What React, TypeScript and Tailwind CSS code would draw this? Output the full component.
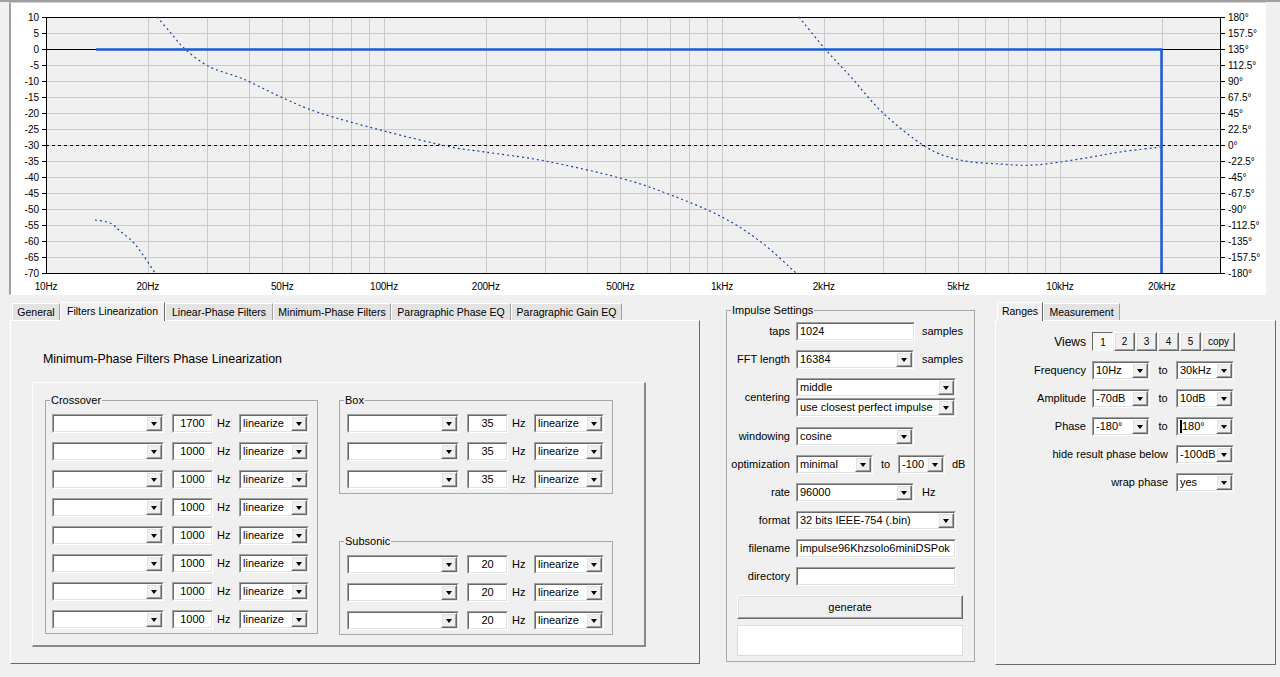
import React from "react"

// Win32 classic 3D borders
const SUNK_OUT = "border border-t-[#a0a0a0] border-l-[#a0a0a0] border-r-white border-b-white"
const SUNK_IN = "border border-t-[#696969] border-l-[#696969] border-r-[#e3e3e3] border-b-[#e3e3e3]"
const RAISE_OUT = "border border-t-white border-l-white border-r-[#696969] border-b-[#696969]"
const RAISE_IN = "border border-t-[#e3e3e3] border-l-[#e3e3e3] border-r-[#a0a0a0] border-b-[#a0a0a0]"

// chart geometry (page px)
const X0 = 46
const X1 = 1220
const Y0 = 17
const Y1 = 273
const DECADE = 338
const fx = (f: number) => X0 + Math.log10(f / 10) * DECADE

const freqs: number[] = []
for (const d of [10, 100, 1000]) for (let m = 1; m <= 9; m++) freqs.push(d * m)
freqs.push(10000, 20000)

const freqLabels: [number, string][] = [
  [10, "10Hz"], [20, "20Hz"], [50, "50Hz"], [100, "100Hz"], [200, "200Hz"], [500, "500Hz"],
  [1000, "1kHz"], [2000, "2kHz"], [5000, "5kHz"], [10000, "10kHz"], [20000, "20kHz"],
]

const phaseA = [[95, 220], [110, 223], [120, 231], [133, 242], [143, 255], [155, 273]]
const phaseB = [
  [157, 17], [170, 32], [185, 49], [208, 66], [235, 76], [250, 82], [283, 98], [320, 113],
  [384, 131], [451, 147], [485, 152], [545, 161], [620, 178], [671, 195], [722, 217],
  [761, 242], [796, 273],
]
const phaseC = [
  [799, 17], [826, 50], [851, 77], [883, 113], [926, 147], [960, 160], [1000, 164],
  [1035, 165], [1080, 159], [1120, 152], [1161, 147],
]

// catmull-rom -> cubic bezier
function smooth(pts: number[][]) {
  let d = `M${pts[0][0]},${pts[0][1]}`
  for (let i = 0; i < pts.length - 1; i++) {
    const p0 = pts[i - 1] || pts[i]
    const p1 = pts[i]
    const p2 = pts[i + 1]
    const p3 = pts[i + 2] || p2
    const c1 = [p1[0] + (p2[0] - p0[0]) / 6, p1[1] + (p2[1] - p0[1]) / 6]
    const c2 = [p2[0] - (p3[0] - p1[0]) / 6, p2[1] - (p3[1] - p1[1]) / 6]
    d += ` C${c1[0]},${c1[1]} ${c2[0]},${c2[1]} ${p2[0]},${p2[1]}`
  }
  return d
}

function Chart() {
  const rows = Array.from({ length: 17 }, (_, i) => i)
  return (
    <svg width={1254} height={291} viewBox="11 3 1254 291" className="block">
      <rect x={X0} y={Y0} width={X1 - X0} height={Y1 - Y0} fill="#f0f0f0" />
      {freqs.map((f) => (
        <line key={f} x1={Math.round(fx(f)) + 0.5} x2={Math.round(fx(f)) + 0.5} y1={Y0} y2={Y1} stroke="#cacaca" />
      ))}
      {rows.map((i) => (
        <line key={i} x1={X0} x2={X1} y1={Y0 + i * 16 + 0.5} y2={Y0 + i * 16 + 0.5} stroke="#cacaca" />
      ))}
      {/* frame + ticks */}
      <rect x={X0 + 0.5} y={Y0 + 0.5} width={X1 - X0} height={Y1 - Y0} fill="none" stroke="#000" />
      {rows.map((i) => (
        <g key={i}>
          <line x1={X0 - 4} x2={X0} y1={Y0 + i * 16 + 0.5} y2={Y0 + i * 16 + 0.5} stroke="#000" />
          <line x1={X1} x2={X1 + 5} y1={Y0 + i * 16 + 0.5} y2={Y0 + i * 16 + 0.5} stroke="#000" />
          <text x={39} y={Y0 + i * 16 + 3.5} textAnchor="end" fontSize={10} fill="#000">
            {10 - 5 * i}
          </text>
          <text x={1228} y={Y0 + i * 16 + 3.5} fontSize={10} fill="#000">
            {`${180 - 22.5 * i}°`}
          </text>
        </g>
      ))}
      {freqLabels.map(([f, l]) => (
        <text key={l} x={fx(f)} y={290} textAnchor="middle" fontSize={10} letterSpacing={-0.2} fill="#000">
          {l}
        </text>
      ))}
      {/* reference lines */}
      <line x1={X0} x2={X1} y1={49.5} y2={49.5} stroke="#000" />
      <line x1={X0} x2={X1} y1={145.5} y2={145.5} stroke="#000" strokeDasharray="3 3" />
      {/* phase */}
      {[phaseA, phaseB, phaseC].map((p, i) => (
        <path key={i} d={smooth(p)} fill="none" stroke="#1a46a0" strokeWidth={1.2} strokeDasharray="2 3" />
      ))}
      {/* amplitude */}
      <polyline points="96,49.5 1161.5,49.5 1161.5,273" fill="none" stroke="#1d5ad6" strokeWidth={2.5} />
    </svg>
  )
}

function Arrow() {
  return (
    <div className={`w-[16px] h-full shrink-0 bg-[#f0f0f0] ${RAISE_OUT}`}>
      <div className={`h-full flex items-center justify-center ${RAISE_IN}`}>
        <div className="w-0 h-0 border-x-[3px] border-x-transparent border-t-[4px] border-t-black" />
      </div>
    </div>
  )
}

function Combo({ w, value }: { w: string; value?: React.ReactNode }) {
  return (
    <div className={`${w} h-[19px] shrink-0 ${SUNK_OUT}`}>
      <div className={`h-full flex bg-white ${SUNK_IN}`}>
        <span className="flex-1 pl-[2px] leading-[15px] whitespace-nowrap overflow-hidden flex items-center">
          {value}
        </span>
        <Arrow />
      </div>
    </div>
  )
}

function TextBox({ w, value, center }: { w: string; value?: string; center?: boolean }) {
  return (
    <div className={`${w} h-[19px] shrink-0 ${SUNK_OUT}`}>
      <div className={`h-full bg-white leading-[15px] whitespace-nowrap overflow-hidden px-[2px] ${SUNK_IN} ${center ? "text-center" : ""}`}>
        {value}
      </div>
    </div>
  )
}

function Group({ label, className, children }: { label: string; className: string; children: React.ReactNode }) {
  return (
    <div className={`relative border border-[#a8a8a8] shrink-0 ${className}`}>
      <span className="absolute -top-[7px] left-[4px] bg-[#f0f0f0] px-[1px] leading-[13px]">{label}</span>
      {children}
    </div>
  )
}

function Tab({ label, w, active }: { label: string; w: string; active?: boolean }) {
  return active ? (
    <div className={`${w} h-[19px] -mb-[1px] relative z-10 bg-[#f0f0f0] border-t border-l border-r border-t-white border-l-white border-r-[#696969] text-center text-[10.5px] leading-[17px]`}>
      {label}
    </div>
  ) : (
    <div className={`${w} h-[17px] bg-[#e3e3e3] border-t border-l border-r border-t-white border-l-white border-r-[#a0a0a0] text-center text-[10.5px] leading-[16px]`}>
      {label}
    </div>
  )
}

function FilterRow({ hz }: { hz: string }) {
  return (
    <div className="flex items-center h-[19px]">
      <Combo w="w-[112px]" />
      <TextBox w="w-[41px] ml-[8px]" value={hz} center />
      <span className="w-[26px] pl-[4px]">Hz</span>
      <Combo w="w-[70px]" value="linearize" />
    </div>
  )
}

function FormRow({ label, children, className = "" }: { label: string; children: React.ReactNode; className?: string }) {
  return (
    <div className={`flex items-center ${className}`}>
      <span className="w-[63px] text-right whitespace-nowrap">{label}</span>
      <div className="ml-[6px] flex items-center">{children}</div>
    </div>
  )
}

function ViewBtn({ label, pressed, w = "w-[21px]" }: { label: string; pressed?: boolean; w?: string }) {
  return pressed ? (
    <div className={`${w} h-[19px] border border-t-[#696969] border-l-[#696969] border-r-white border-b-white bg-[#f7f7f7] text-[10px] flex items-center justify-center pt-[2px] pl-[1px]`}>
      {label}
    </div>
  ) : (
    <div className={`${w} h-[19px] ${RAISE_OUT} bg-[#f0f0f0]`}>
      <div className={`h-full text-[10px] flex items-center justify-center ${RAISE_IN}`}>{label}</div>
    </div>
  )
}

function RangeRow({ label, from, to, className = "" }: { label: string; from: React.ReactNode; to: React.ReactNode; className?: string }) {
  return (
    <div className={`flex items-center ${className}`}>
      <span className="w-[90px] text-right">{label}</span>
      <Combo w="w-[58px] ml-[6px]" value={from} />
      <span className="w-[26px] text-center">to</span>
      <Combo w="w-[58px]" value={to} />
    </div>
  )
}

export default function App() {
  return (
    <div className="w-[1280px] h-[677px] overflow-hidden bg-[#f0f0f0] text-[11px] text-black font-['Liberation_Sans',Arial,sans-serif]">
      {/* graph */}
      <div className="border-t-2 border-[#a0a0a0] pl-[9px]">
        <div className="w-[1257px] border-l-2 border-t border-r border-b border-l-[#a0a0a0] border-t-[#d0d0d0] border-r-white border-b-white bg-white">
          <Chart />
        </div>
      </div>

      <div className="flex items-start pl-[10px]">
        {/* Filters tab control */}
        <div className="w-[690px] shrink-0 mt-[7px]">
          <div className="flex items-end h-[18px] pl-[2px]">
            <Tab label="General" w="w-[48px]" />
            <Tab label="Filters Linearization" w="w-[105px]" active />
            <Tab label="Linear-Phase Filters" w="w-[108px]" />
            <Tab label="Minimum-Phase Filters" w="w-[118px]" />
            <Tab label="Paragraphic Phase EQ" w="w-[120px]" />
            <Tab label="Paragraphic Gain EQ" w="w-[111px]" />
          </div>
          <div className="h-[344px] border border-t-white border-l-white border-r-[#696969] border-b-[#696969]">
            <div className="ml-[32px] mt-[31px] text-[12.4px] leading-[15px]">Minimum-Phase Filters Phase Linearization</div>
            <div className="ml-[21px] mt-[15px] w-[614px] h-[265px] border-t border-l border-r-2 border-b-2 border-t-white border-l-white border-r-[#8a8a8a] border-b-[#8a8a8a] flex items-start pl-[12px] pt-[17px] gap-[21px]">
              <Group label="Crossover" className="w-[273px] pl-[6px] pt-[13px] pb-[4px]">
                <div className="flex flex-col gap-[9px]">
                  {["1700", "1000", "1000", "1000", "1000", "1000", "1000", "1000"].map((hz, i) => (
                    <FilterRow key={i} hz={hz} />
                  ))}
                </div>
              </Group>
              <div className="flex flex-col">
                <Group label="Box" className="w-[274px] pl-[7px] pt-[13px] pb-[4px]">
                  <div className="flex flex-col gap-[9px]">
                    {[0, 1, 2].map((i) => (
                      <FilterRow key={i} hz="35" />
                    ))}
                  </div>
                </Group>
                <Group label="Subsonic" className="w-[274px] mt-[47px] pl-[7px] pt-[13px] pb-[4px]">
                  <div className="flex flex-col gap-[9px]">
                    {[0, 1, 2].map((i) => (
                      <FilterRow key={i} hz="20" />
                    ))}
                  </div>
                </Group>
              </div>
            </div>
          </div>
        </div>

        {/* Impulse settings */}
        <Group label="Impulse Settings" className="ml-[26px] mt-[15px] w-[249px] pt-[11px] pb-[5px]">
          <FormRow label="taps">
            <TextBox w="w-[119px]" value="1024" />
            <span className="ml-[7px]">samples</span>
          </FormRow>
          <FormRow label="FFT length" className="mt-[9px]">
            <Combo w="w-[118px]" value="16384" />
            <span className="ml-[8px]">samples</span>
          </FormRow>
          <FormRow label="centering" className="mt-[9px]">
            <div className="flex flex-col gap-[1px]">
              <Combo w="w-[160px]" value="middle" />
              <Combo w="w-[160px]" value="use closest perfect impulse" />
            </div>
          </FormRow>
          <FormRow label="windowing" className="mt-[10px]">
            <Combo w="w-[118px]" value="cosine" />
          </FormRow>
          <FormRow label="optimization" className="mt-[9px]">
            <Combo w="w-[77px]" value="minimal" />
            <span className="w-[25px] text-center">to</span>
            <Combo w="w-[47px]" value="-100" />
            <span className="ml-[7px]">dB</span>
          </FormRow>
          <FormRow label="rate" className="mt-[9px]">
            <Combo w="w-[118px]" value="96000" />
            <span className="ml-[8px]">Hz</span>
          </FormRow>
          <FormRow label="format" className="mt-[9px]">
            <Combo w="w-[160px]" value="32 bits IEEE-754 (.bin)" />
          </FormRow>
          <FormRow label="filename" className="mt-[9px]">
            <TextBox w="w-[160px]" value="impulse96Khzsolo6miniDSPok" />
          </FormRow>
          <FormRow label="directory" className="mt-[9px]">
            <TextBox w="w-[160px]" />
          </FormRow>
          <div className={`ml-[10px] mt-[9px] w-[226px] h-[24px] bg-[#f0f0f0] ${RAISE_OUT}`}>
            <div className={`h-full flex items-center justify-center ${RAISE_IN}`}>generate</div>
          </div>
          <div className="ml-[10px] mt-[6px] w-[226px] h-[31px] bg-white border border-[#dcdcdc]" />
        </Group>

        {/* Ranges tab control */}
        <div className="ml-[20px] w-[281px] shrink-0 mt-[7px]">
          <div className="flex items-end h-[18px] pl-[2px]">
            <Tab label="Ranges" w="w-[46px]" active />
            <Tab label="Measurement" w="w-[77px]" />
          </div>
          <div className="h-[345px] border border-t-white border-l-white border-r-[#696969] border-b-[#696969] pt-[11px]">
            <div className="flex items-center">
              <span className="w-[90px] text-right text-[12px]">Views</span>
              <div className="ml-[6px] flex gap-[1px]">
                <ViewBtn label="1" pressed />
                <ViewBtn label="2" />
                <ViewBtn label="3" />
                <ViewBtn label="4" />
                <ViewBtn label="5" />
                <ViewBtn label="copy" w="w-[33px]" />
              </div>
            </div>
            <RangeRow label="Frequency" from="10Hz" to="30kHz" className="mt-[10px]" />
            <RangeRow label="Amplitude" from="-70dB" to="10dB" className="mt-[9px]" />
            <RangeRow
              label="Phase"
              from="-180°"
              to={
                <>
                  <span className="inline-block w-[2px] h-[13px] bg-black" />
                  180°
                </>
              }
              className="mt-[9px]"
            />
            <div className="flex items-center mt-[9px]">
              <span className="w-[172px] text-right">hide result phase below</span>
              <Combo w="w-[58px] ml-[8px]" value="-100dB" />
            </div>
            <div className="flex items-center mt-[9px]">
              <span className="w-[172px] text-right">wrap phase</span>
              <Combo w="w-[58px] ml-[8px]" value="yes" />
            </div>
          </div>
        </div>
      </div>
    </div>
  )
}
